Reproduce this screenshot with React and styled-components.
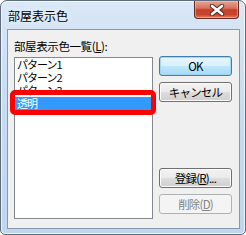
import React from 'react'
import styled, { createGlobalStyle } from 'styled-components'

const GlobalStyle = createGlobalStyle`
  html, body {
    margin: 0;
    padding: 0;
    background: #ffffff;
  }
  body {
    font-family: "Noto Sans CJK JP", "Noto Sans", sans-serif;
  }
`

const Window = styled.div`
  position: relative;
  width: 246px;
  height: 235px;
  box-sizing: border-box;
  border: 1px solid #5d6c7c;
  border-radius: 7px 7px 5px 5px;
  background: linear-gradient(180deg, #dae8f7 0%, #c8dcf2 40%, #bfd6ef 100%);
  box-shadow: inset 0 0 0 1px rgba(255, 255, 255, 0.7);
  display: flex;
  flex-direction: column;
  padding: 0 5px 5px 6px;
`

const TitleBar = styled.div`
  height: 28px;
  display: flex;
  align-items: center;
  padding-left: 1px;
  font-size: 12px;
  color: #000;
  text-shadow: 0 0 6px rgba(255, 255, 255, 0.9);
`

const CloseButton = styled.div`
  position: absolute;
  top: 0;
  right: 6px;
  width: 45px;
  height: 18px;
  box-sizing: border-box;
  border: 1px solid #5e2a22;
  border-top: none;
  border-radius: 0 0 4px 4px;
  background: linear-gradient(180deg, #e8a493 0%, #d8705c 42%, #c4402a 52%, #c9462e 80%, #e57d5f 100%);
  box-shadow: inset 0 0 0 1px rgba(255, 210, 200, 0.45);
  display: flex;
  align-items: center;
  justify-content: center;
`

const Client = styled.div`
  flex: 1;
  border: 1px solid #8a99a9;
  background: #f0f0f0;
  display: flex;
  gap: 6px;
  padding: 0 5px 9px 6px;
  font-size: 11.5px;
  color: #000;
`

const LeftColumn = styled.div`
  display: flex;
  flex-direction: column;
  padding-top: 9px;
`

const Label = styled.div`
  height: 14px;
  line-height: 14px;
  margin-bottom: 4px;
  letter-spacing: -0.4px;
  white-space: nowrap;
`

const Mnemonic = styled.span`
  text-decoration: underline;
`

const ListBox = styled.div`
  width: 139px;
  height: 162px;
  box-sizing: border-box;
  border: 1px solid #828790;
  background: #fff;
  display: flex;
  flex-direction: column;
`

const Item = styled.div`
  position: relative;
  height: 13px;
  line-height: 13px;
  padding-left: 2px;
  font-size: 11px;
  letter-spacing: -1px;
  white-space: nowrap;
  background: ${p => (p.$selected ? '#3399ff' : 'transparent')};
  color: ${p => (p.$selected ? '#fff' : '#000')};
`

const Marker = styled.div`
  position: absolute;
  top: -7px;
  left: -5px;
  right: -4px;
  bottom: -5px;
  border: 5px solid #ff0000;
  border-radius: 5px;
  pointer-events: none;
`

const RightColumn = styled.div`
  display: flex;
  flex-direction: column;
  gap: 6px;
  padding-top: 26px;
  padding-bottom: 5px;
`

const Button = styled.div`
  width: 73px;
  height: 20px;
  box-sizing: border-box;
  border: 1px solid ${p => (p.$default ? '#3c7fb1' : p.$disabled ? '#adb2b5' : '#707070')};
  border-radius: 3px;
  background: ${p =>
    p.$default
      ? 'linear-gradient(180deg, #eaf6fd 0%, #d9f0fc 50%, #bee6fd 51%, #a7d9f5 100%)'
      : p.$disabled
      ? '#f4f4f4'
      : 'linear-gradient(180deg, #f2f2f2 0%, #ebebeb 50%, #dddddd 51%, #cfcfcf 100%)'};
  box-shadow: inset 0 0 0 1px ${p => (p.$default ? '#9fd6f4' : p.$disabled ? '#f4f4f4' : '#fcfcfc')};
  color: ${p => (p.$disabled ? '#838383' : '#000')};
  display: flex;
  align-items: center;
  justify-content: center;
  font-size: 11.5px;
  letter-spacing: -0.8px;
  white-space: nowrap;
  margin-top: ${p => (p.$push ? 'auto' : '0')};
`

const items = ['パターン1', 'パターン2', 'パターン3', '透明']

export default function App() {
  return (
    <>
      <GlobalStyle />
      <Window>
        <TitleBar>部屋表示色</TitleBar>
        <CloseButton>
          <svg width="16" height="12" viewBox="0 0 16 12">
            <path d="M3 2 L13 10 M13 2 L3 10" stroke="#4a2a24" strokeWidth="4.4" strokeLinecap="round" fill="none" />
            <path d="M3 2 L13 10 M13 2 L3 10" stroke="#ffffff" strokeWidth="2.6" strokeLinecap="round" fill="none" />
          </svg>
        </CloseButton>
        <Client>
          <LeftColumn>
            <Label>
              部屋表示色一覧(<Mnemonic>L</Mnemonic>):
            </Label>
            <ListBox>
              {items.map((it, i) => (
                <Item key={it} $selected={i === 3}>
                  {it}
                  {i === 3 && <Marker />}
                </Item>
              ))}
            </ListBox>
          </LeftColumn>
          <RightColumn>
            <Button $default>OK</Button>
            <Button>キャンセル</Button>
            <Button $push>
              登録(<Mnemonic>R</Mnemonic>)...
            </Button>
            <Button $disabled>
              削除(<Mnemonic>D</Mnemonic>)
            </Button>
          </RightColumn>
        </Client>
      </Window>
    </>
  )
}
